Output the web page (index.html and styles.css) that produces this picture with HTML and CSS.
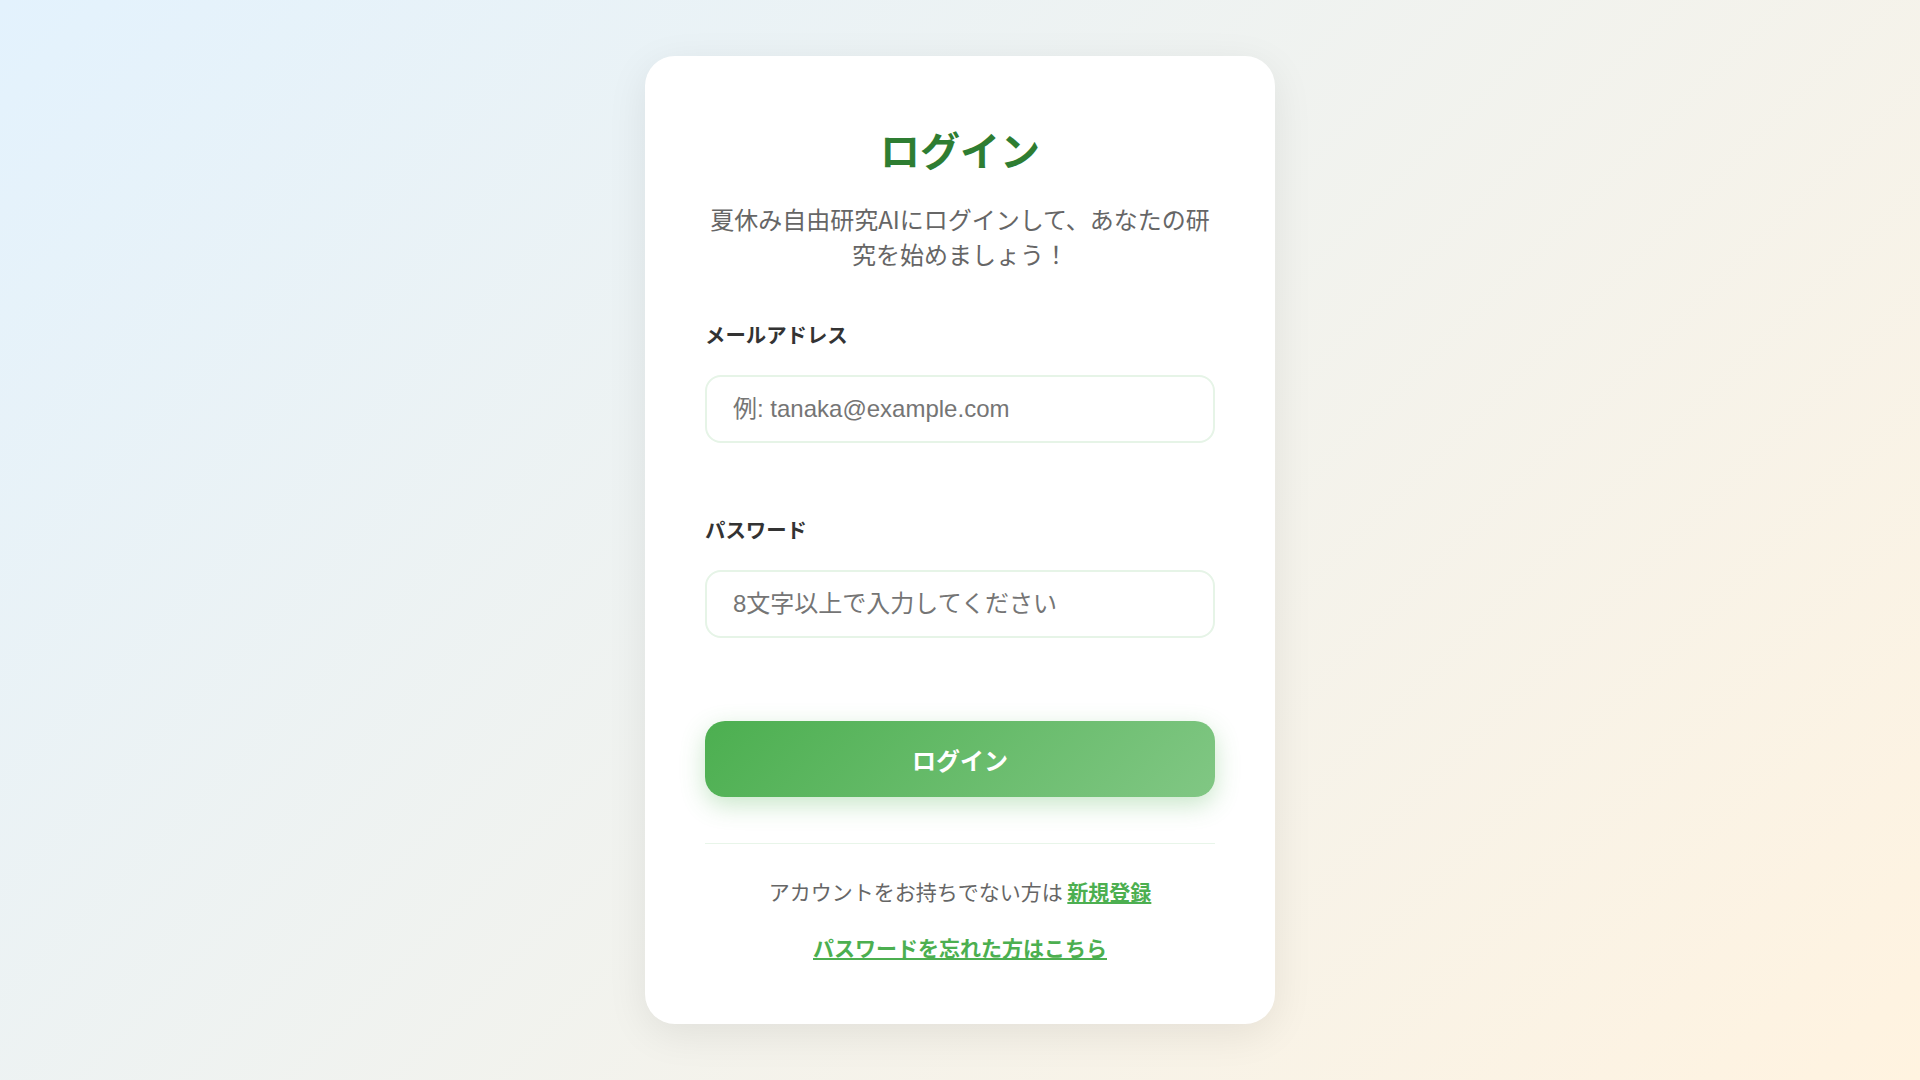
FILE: index.html
```html
<!DOCTYPE html>
<html lang="ja">
	<head>
		<meta charset="utf-8">
		<title>ログイン - 夏休み自由研究AI</title>
		<link rel="stylesheet" href="styles.css">
	</head>
	<body>
		<div class="login-card">
			<h1 class="login-title">ログイン</h1>
			<p class="login-subtitle">夏休み自由研究AIにログインして、あなたの研究を始めましょう！</p>
			<form class="login-form" onsubmit="return false">
				<div class="form-group">
					<label class="form-label" for="email">メールアドレス</label>
					<input class="form-input" type="email" id="email" placeholder="例: tanaka@example.com">
				</div>
				<div class="form-group">
					<label class="form-label" for="password">パスワード</label>
					<input class="form-input" type="password" id="password" placeholder="8文字以上で入力してください">
				</div>
				<button class="login-button" type="submit">ログイン</button>
			</form>
			<div class="login-footer">
				<p class="footer-text">アカウントをお持ちでない方は <a class="footer-link" href="#">新規登録</a></p>
				<p class="footer-text"><a class="footer-link" href="#">パスワードを忘れた方はこちら</a></p>
			</div>
		</div>
	</body>
</html>
```

FILE: styles.css
```css
*
{
	box-sizing: border-box;
}
body
{
	margin: 0;
	min-height: 100vh;
	display: flex;
	align-items: center;
	justify-content: center;
	background: linear-gradient(135deg, #e3f2fd 0%, #fff3e0 100%);
	font-family: "Noto Sans CJK JP", "Noto Sans", sans-serif;
	color: #333;
}
.login-card
{
	width: 630px;
	padding: 69px 60px 61px;
	background-color: #fff;
	border-radius: 30px;
	box-shadow: 0 10px 40px rgba(0, 0, 0, 0.08);
	text-align: center;
}
.login-title
{
	margin: 0 0 28px;
	font-size: 40px;
	line-height: 48px;
	font-weight: 700;
	color: #2e7d32;
}
.login-subtitle
{
	margin: 0 0 48px;
	font-size: 24px;
	line-height: 35px;
	color: #666;
}
.login-form
{
	text-align: left;
}
.form-group
{
	margin-bottom: 71px;
}
.form-group + .form-group
{
	margin-bottom: 83px;
}
.form-label
{
	display: block;
	margin-bottom: 26px;
	font-size: 20.4px;
	line-height: 30px;
	font-weight: 700;
	color: #333;
}
.form-input
{
	display: block;
	width: 100%;
	height: 68px;
	padding: 0 26px;
	border: 2px solid #e6f4e7;
	border-radius: 16px;
	background-color: #fff;
	font-family: "Liberation Sans", "Noto Sans CJK JP", sans-serif;
	font-size: 24px;
	color: #333;
	outline: none;
}
.form-input::placeholder
{
	color: #757575;
}
.login-button
{
	display: block;
	width: 100%;
	height: 76px;
	border: none;
	border-radius: 20px;
	background: linear-gradient(135deg, #4caf50 0%, #81c784 100%);
	box-shadow: 0 8px 25px rgba(76, 175, 80, 0.3);
	font-family: "Noto Sans CJK JP", sans-serif;
	font-size: 24px;
	font-weight: 700;
	color: #fff;
	cursor: pointer;
}
.login-footer
{
	margin-top: 46px;
	padding-top: 32px;
	border-top: 1px solid #e8f5e9;
}
.footer-text
{
	margin: 0;
	font-size: 21px;
	line-height: 31px;
	color: #666;
}
.footer-text + .footer-text
{
	margin-top: 25px;
}
.footer-link
{
	font-weight: 700;
	color: #4caf50;
	text-decoration: underline;
}
```
